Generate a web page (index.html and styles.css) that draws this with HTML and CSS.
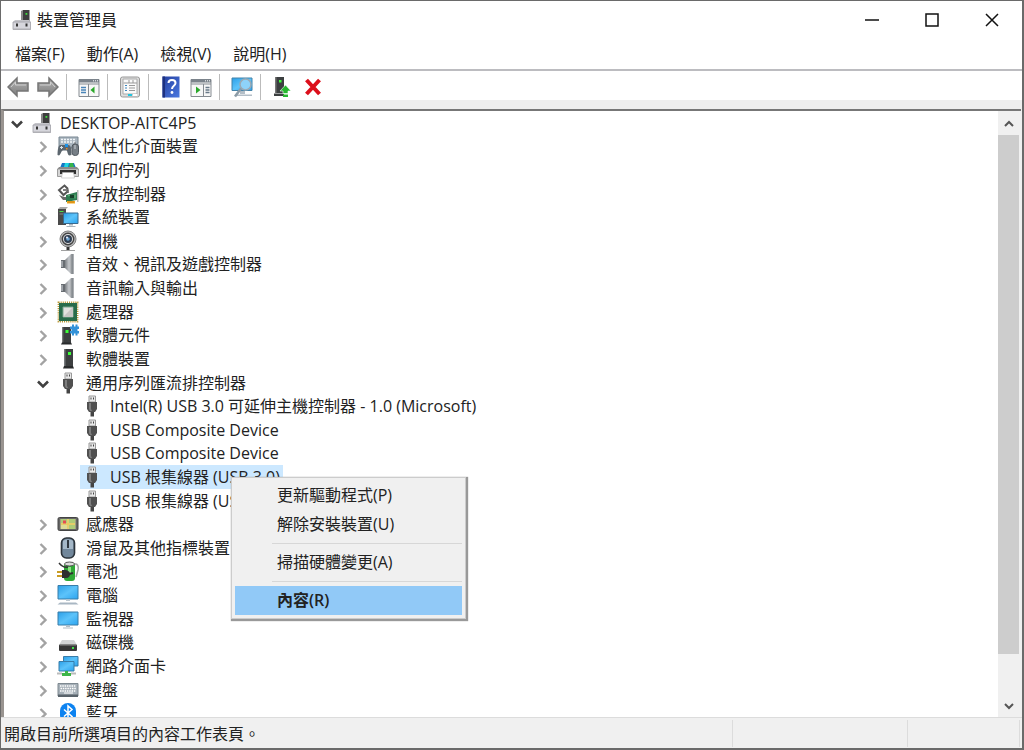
FILE: index.html
```
<!DOCTYPE html>
<html lang="zh-Hant">
<head>
    <meta charset="UTF-8">
    <meta name="viewport" content="width=device-width, initial-scale=1.0">
    <title>裝置管理員</title>
    <link rel="stylesheet" href="styles.css">
</head>
<body>
    <svg class="sprite" aria-hidden="true">
        <defs>
            <linearGradient id="blue" x1="0" y1="0" x2="1" y2="1"><stop offset="0" stop-color="#2b9fe8"/><stop offset=".5" stop-color="#5cc3fa"/><stop offset="1" stop-color="#2ba4f0"/></linearGradient>
            <linearGradient id="metal" x1="0" y1="0" x2="1" y2="0"><stop offset="0" stop-color="#7c8084"/><stop offset=".5" stop-color="#c5c8cc"/><stop offset="1" stop-color="#8a8d90"/></linearGradient>
            <linearGradient id="arrow" x1="0" y1="0" x2="0" y2="1"><stop offset="0" stop-color="#b4b4b4"/><stop offset="1" stop-color="#7c7c7c"/></linearGradient>
            <linearGradient id="book" x1="0" y1="0" x2="1" y2="1"><stop offset="0" stop-color="#2540a0"/><stop offset="1" stop-color="#4a78e0"/></linearGradient>
        </defs>
        <symbol id="right" viewBox="0 0 18 18"><path d="M6.500 4 11.500 9 6.500 14" fill="none" stroke="#a3a3a3" stroke-width="2.400"/></symbol>
        <symbol id="down" viewBox="0 0 18 18"><path d="M4 6.500 9 11.500 14 6.500" fill="none" stroke="#404040" stroke-width="2.600"/></symbol>
        <symbol id="computer" viewBox="0 0 22 22">
            <path d="M12 1h6.500v12H12z" fill="#3e3e3e"/><path d="M10 2 12 1v11h-2z" fill="#888"/><path d="M14.500 4h1.800v1.800h-1.800z" fill="#3ce03c"/>
            <path d="M4 11h14l1.800 2H2z" fill="#c5c5ca"/><path d="M2 13h17.500v7.500H2z" fill="#d6d6dc" stroke="#a0a0a6" stroke-width=".8"/>
            <path d="M5 14.500h2v3H5zm9.500 0h2v3h-2z" fill="#333"/><path d="M2 19.500h17.500V21H2z" fill="#b0b0b5"/>
        </symbol>
        <symbol id="hid" viewBox="0 0 22 22">
            <path d="M2 2h19v11H2z" fill="#a9b5bf" stroke="#788792"/><path d="M4 4.500h15M4 7h15" stroke="#f1f5f8" stroke-width="1.500" stroke-dasharray="2 1"/>
            <path d="M.500 20c0-6 1-10 3-10h8c2 0 3 3 3 10l-2 .500c-2 0-2-5-3-5H6c-2 0-2 4-4 5z" fill="#5c666e"/>
            <path d="M3 12.500h3M4.500 11v3" stroke="#dbe3e8"/><path d="M8 9h3v3H8z" fill="#1b91e6"/><path d="M9 13h1.500v1.500H9z" fill="#e68928"/>
            <path d="M18 7v3" stroke="#777"/><rect x="15" y="9" width="6.500" height="11.500" rx="3" fill="#777f86" stroke="#515960"/><path d="M18 10v4" stroke="#cdd3d8"/>
        </symbol>
        <symbol id="printer" viewBox="0 0 22 22">
            <path d="M5 4h12l2 5H3z" fill="#1674c4"/><path d="M8 4h4l-1 4H7z" fill="#21d7e0"/><path d="M13 4h3l1 4h-5z" fill="#37b34a"/>
            <path d="M2 8h18l1.500 2H.500z" fill="#8a8a8a"/><path d="M.500 10h21v7.500h-21z" fill="#d5d5d5" stroke="#898989" stroke-width=".8"/><path d="M3 11h16v4H3z" fill="#303030"/><path d="M5.500 13.500h11l1 5.500H4.500z" fill="#fff" stroke="#bbb" stroke-width=".6"/>
        </symbol>
        <symbol id="storage" viewBox="0 0 22 22">
            <path d="M11 6 7.500 2.500 2 7l4.500 5 4-3.500" fill="none" stroke="#565656" stroke-width="2"/><path d="M6 7h5v3" fill="none" stroke="#565656" stroke-width="1.500"/>
            <path d="M2 12l4 5h5v-3H7z" fill="#696969"/><path d="m9 12 11-3v8l-11 2z" fill="#2e7b51"/><path d="M13 12h4v3h-4z" fill="#173f29"/><path d="m11 13 2-1m5-.500v4" stroke="#68bf81"/>
            <path d="M10 18h8v2.500h-8z" fill="#f2a61c"/><path d="M12 18v2m2-2v2m2-2v2" stroke="#aa6c10" stroke-width=".6"/><path d="M20 7h1.500v12H20z" fill="#bbb"/>
        </symbol>
        <symbol id="system" viewBox="0 0 22 22">
            <path d="M1 3h8v16H1z" fill="#4a4a4a"/><path d="M1 3 3 1h8L9 3z" fill="#aaa"/><path d="M2.500 5h4v1h-4z" fill="#4be04b"/><path d="M2.500 8h5" stroke="#888"/>
            <path d="M6.500 7h14.500v10.500H6.500z" fill="url(#blue)" stroke="#386b91"/><path d="M12 18h4v1.500h-4zM9.500 20h9v1h-9z" fill="#a9b3bb"/>
        </symbol>
        <symbol id="camera" viewBox="0 0 22 22">
            <circle cx="11" cy="9" r="8" fill="#bbb" stroke="#858585"/><circle cx="11" cy="9" r="5.700" fill="#e5e5e5" stroke="#444" stroke-width="1.500"/><circle cx="11" cy="9" r="4" fill="#303e51"/><circle cx="11" cy="9" r="1.800" fill="#6aa5d4"/><circle cx="10" cy="7.500" r="1" fill="#eef"/>
            <path d="M9.500 17h3v3h-3z" fill="#333"/><path d="M4 20h14v1H4z" fill="#a0a0a0"/>
        </symbol>
        <symbol id="speaker" viewBox="0 0 22 22">
            <path d="M4 7h5v8H4z" fill="#686d72"/><path d="M8 7 14 1h2v20h-2l-6-6z" fill="url(#metal)"/><path d="M14.500 1h2.200v20h-2.200z" fill="#878c91"/><path d="M5 8v6" stroke="#d8dce0"/>
        </symbol>
        <symbol id="cpu" viewBox="0 0 22 22">
            <path d="M1.500 1.500h19v19h-19z" fill="none" stroke="#b89632" stroke-width="1.800" stroke-dasharray="1.100 1"/><path d="M2 2h18v18H2z" fill="#286c4b"/><path d="M6 6h10v10H6z" fill="#e2e2e0" stroke="#7ba58d"/><path d="m6 16 10-10v10z" fill="#c7c7c5"/>
        </symbol>
        <symbol id="tower" viewBox="0 0 22 22">
            <path d="M7 1h9v17H7z" fill="#3c3f40"/><path d="M7 1h1.500v17H7z" fill="#75797b"/><path d="M11 4h3v3h-3z" fill="#3cff38"/><path d="M7 18h9l1 2.500H6z" fill="#292b2c"/>
        </symbol>
        <symbol id="component" viewBox="0 0 22 22">
            <path d="M5 3h9v16H5z" fill="#3c3f40"/><path d="M5 3h1.300v16H5z" fill="#777"/><path d="M8.500 6h3v3h-3z" fill="#3cff38"/><path d="M5 18.500h9l1 2H4z" fill="#292b2c"/>
            <path d="M13 2.500h2V.500h2v2h1.500v-2h2v2H22V5h-1.500v2H22v2.500h-1.500v2h-2v-2H17v2h-2v-2h-2V7h1.500V5H13z" fill="#3392d8"/>
        </symbol>
        <symbol id="usb" viewBox="0 0 22 22">
            <path d="M8 1h6.500v6H8z" fill="#e9e9e9" stroke="#999"/><path d="M9.500 2.500h1v2h-1zm2.500 0h1v2h-1z" fill="#444"/><path d="M6 7h10v7l-2 3H8l-2-3z" fill="#505050"/><path d="M8 8h2v6l1 2H9l-1-2z" fill="#7d7d7d"/><path d="M9.500 17h3.500v4.500H9.500z" fill="#444"/>
        </symbol>
        <symbol id="sensor" viewBox="0 0 22 22">
            <rect x="1" y="4.500" width="20" height="13" rx="1.500" fill="#666" stroke="#444"/><path d="M3.500 6h15v10h-15z" fill="#dddb98"/><path d="M4 6h6v4H4zm8 0h6v4h-6zm0 6h6v4h-6z" fill="#aecb78"/><path d="M4 11h14M11 6v10" stroke="#e8c95a" stroke-width="1.300"/><path d="M6 7.500h3v3H6z" fill="#e64c51"/>
        </symbol>
        <symbol id="mouse" viewBox="0 0 22 22">
            <rect x="4.500" y="1" width="13" height="20" rx="5" fill="#71879b" stroke="#2c343b" stroke-width="1.600"/><path d="M6 4c2-2 8-2 10 0v8H6z" fill="#a5b8c8"/><path d="M11 3v8" stroke="#303840" stroke-width="2"/>
        </symbol>
        <symbol id="battery" viewBox="0 0 22 22">
            <path d="M16 4h3q3 1 2 6l-2 7" fill="none" stroke="#a7a7a7" stroke-width="1.500"/><rect x="7" y="3" width="11" height="18" rx="3" fill="#2fa836"/><path d="M11 7h3v7h-3z" fill="#8be082"/><ellipse cx="12.500" cy="4" rx="5" ry="2" fill="#ddd" stroke="#555"/>
            <path d="M2 3q4 5 9 4" fill="none" stroke="#333" stroke-width="1.500"/><path d="M0 12h6M0 16h6" stroke="#c99c24" stroke-width="1.800"/><path d="M5 10h4c3 1 4 2 4 4s-1 4-4 4H5z" fill="#303030"/><path d="m12 14 4-1" stroke="#303030" stroke-width="2"/>
        </symbol>
        <symbol id="pc" viewBox="0 0 22 22">
            <path d="M1 1.500h20V15H1z" fill="url(#blue)" stroke="#397ca8"/><path d="M9 15.500h4V17H9z" fill="#bdc9d1"/><path d="M3 18.500h16l2.500 2H.500z" fill="#a9b7c3"/>
        </symbol>
        <symbol id="monitor" viewBox="0 0 22 22">
            <path d="M1 4h20v13H1z" fill="url(#blue)" stroke="#397ca8"/><path d="M9 17.500h4V19H9zM6 19.500h10v1H6z" fill="#b2bec7"/>
        </symbol>
        <symbol id="disk" viewBox="0 0 22 22">
            <path d="M5 9h12l3 5H2z" fill="#d3d5d6"/><rect x="2" y="13.500" width="18" height="6.500" rx="1" fill="#373737"/><path d="M3 14h16" stroke="#8d8d8d"/><path d="M15 16h2v2h-2z" fill="#42e24b"/>
        </symbol>
        <symbol id="network" viewBox="0 0 22 22">
            <path d="M6.500 1.500H21V11H6.500z" fill="url(#blue)" stroke="#397ca8"/><path d="M2 6.500h15V16H2z" fill="url(#blue)" stroke="#397ca8"/><path d="M8 16h3v2h3v3H5v-3h3z" fill="#3eb549"/><path d="M0 18.500h5m9 0h5" stroke="#bbb" stroke-width="2"/>
        </symbol>
        <symbol id="keyboard" viewBox="0 0 22 22">
            <path d="M1 4.500h20V17H1z" fill="#a6b0b8" stroke="#7e8991"/><path d="M3 7h16M3.500 9.500h16M3 12h16" stroke="#fff" stroke-width="1.300" stroke-dasharray="1.500 .8"/><path d="M7 14h9" stroke="#fff"/><path d="M1 15.500h20V18H1z" fill="#59636b"/>
        </symbol>
        <symbol id="bluetooth" viewBox="0 0 22 22">
            <rect x="3" y="1" width="16" height="20" rx="8" fill="#0c82f0"/><path d="m7 7.500 8 7-4 3.500V4l4 3.500-8 7" fill="none" stroke="#fff" stroke-width="1.500"/>
        </symbol>
        <symbol id="back" viewBox="0 0 22 22"><path d="M1 11 10 2v5h11v8H10v5z" fill="url(#arrow)" stroke="#767676" stroke-width="1.500"/><path d="m4 11 4.500-5v3H19" fill="none" stroke="#cecece"/></symbol>
        <symbol id="forward" viewBox="0 0 22 22"><path d="m21 11-9-9v5H1v8h11v5z" fill="url(#arrow)" stroke="#767676" stroke-width="1.500"/><path d="M3 9h10.500V6l4.500 5" fill="none" stroke="#cecece"/></symbol>
        <symbol id="treeview" viewBox="0 0 22 22">
            <path d="M1 3.500h20v17H1z" fill="#f7f7f7" stroke="#858b91"/><path d="M1 3h20v3.500H1z" fill="#7b838b"/><path d="M15 4.800h1m1 0h1m1 0h1" stroke="#fff"/><path d="M1 8h20M10.500 8v12" stroke="#858b91"/><path d="M3 11.500h5M3 14h5M3 16.500h5" stroke="#4985b9" stroke-width="1.300"/><path d="M16.500 10.500v7L12.500 14z" fill="#29a729"/>
        </symbol>
        <symbol id="actionpane" viewBox="0 0 22 22">
            <path d="M1 3.500h20v17H1z" fill="#f7f7f7" stroke="#858b91"/><path d="M1 3h20v3.500H1z" fill="#7b838b"/><path d="M15 4.800h1m1 0h1m1 0h1" stroke="#fff"/><path d="M1 8h20M13.500 8v12" stroke="#858b91"/><path d="M15.500 11.500h4m-4 2.500h4m-4 2.500h4" stroke="#687988" stroke-width="1.300"/><path d="M6 10.500v7l4.500-3.500z" fill="#29a729"/>
        </symbol>
        <symbol id="properties" viewBox="0 0 22 22">
            <rect x="1.500" y="1" width="19" height="20" rx="2" fill="#ddd" stroke="#999"/><path d="M4 3h14v15H4z" fill="#fafafa" stroke="#aaa"/><path d="M4.500 7H18M10 4v3m4-3v3" stroke="#999"/><path d="M6 9.500h2M6 12h2m-2 2.500h2" stroke="#3c87bf"/><path d="M10 9.500h6M10 12h6m-6 2.500h6" stroke="#999"/><path d="M9 18h4v2H9z" fill="#20c5df"/><path d="M14 18h4v2h-4z" fill="#fff"/>
        </symbol>
        <symbol id="help" viewBox="0 0 22 22">
            <path d="M2.500.500h17v21h-17z" fill="url(#book)"/><path d="M2.500.500H5v21H2.500z" fill="#1d3180"/><path d="M8.500 7c0-4 7-4 7 0 0 3-3.500 2.500-3.500 6" fill="none" stroke="#fff" stroke-width="2"/><circle cx="12" cy="16.500" r="1.400" fill="#fff"/>
        </symbol>
        <symbol id="scan" viewBox="0 0 22 22">
            <path d="M1 2h20v12.500H1z" fill="url(#blue)" stroke="#4383aa"/><path d="M9 15h5v3H9zM6 18.500h15V20H6z" fill="#b3bec7"/><circle cx="14.500" cy="8.500" r="5.500" fill="#8ed3f9" stroke="#9aaab5" stroke-width="1.500"/><path d="m10 12.500-6 8" stroke="#8c9ba6" stroke-width="2.500"/>
        </symbol>
        <symbol id="update" viewBox="0 0 22 22">
            <path d="M3 1h9v16H3z" fill="#3c3f40"/><path d="M3 1h1.500v16H3z" fill="#777"/><path d="M7 4h2.500v2.500H7z" fill="#3cff38"/><path d="M2 17.500h10V20H2z" fill="#3c3f40"/><path d="m13.500 9 5.500 6h-3v2.500h-5V15H8z" fill="#25b82e" stroke="#fff" stroke-width=".6"/><path d="M11 18.500h5V21h-5z" fill="#25b82e"/>
        </symbol>
        <symbol id="remove" viewBox="0 0 22 22"><path d="m4.500 4 13 14M17.500 4l-13 14" stroke="#dc0f1b" stroke-width="4"/></symbol>
    </svg>

    <div class="window">
        <header class="titlebar">
            <svg class="icon"><use href="#computer"/></svg>
            <h1>裝置管理員</h1>
            <div class="controls">
                <button aria-label="最小化"><svg viewBox="0 0 14 14"><path d="M0 7h14"/></svg></button>
                <button aria-label="最大化"><svg viewBox="0 0 14 14"><path d="M1 1h12v12H1z"/></svg></button>
                <button aria-label="關閉"><svg viewBox="0 0 14 14"><path d="m1 1 12 12M13 1 1 13"/></svg></button>
            </div>
        </header>
        <nav class="menubar">
            <button>檔案(F)</button>
            <button>動作(A)</button>
            <button>檢視(V)</button>
            <button>說明(H)</button>
        </nav>
        <div class="toolbar">
            <div class="group">
                <button aria-label="上一頁"><svg class="icon"><use href="#back"/></svg></button>
                <button aria-label="下一頁"><svg class="icon"><use href="#forward"/></svg></button>
            </div>
            <div class="group"><button aria-label="顯示主控台樹狀目錄"><svg class="icon"><use href="#treeview"/></svg></button></div>
            <div class="group"><button aria-label="內容"><svg class="icon"><use href="#properties"/></svg></button></div>
            <div class="group">
                <button aria-label="說明"><svg class="icon"><use href="#help"/></svg></button>
                <button aria-label="顯示動作窗格"><svg class="icon"><use href="#actionpane"/></svg></button>
            </div>
            <div class="group"><button aria-label="掃描硬體變更"><svg class="icon"><use href="#scan"/></svg></button></div>
            <div class="group">
                <button aria-label="更新驅動程式"><svg class="icon"><use href="#update"/></svg></button>
                <button aria-label="解除安裝裝置"><svg class="icon"><use href="#remove"/></svg></button>
            </div>
        </div>

        <main class="client">
            <div class="pane">
                <div class="view">
                    <ul class="tree">
                        <li class="root"><button class="toggle" aria-label="摺疊"><svg><use href="#down"/></svg></button><span class="node"><svg class="icon"><use href="#computer"/></svg>DESKTOP-AITC4P5</span></li>
                        <li><button class="toggle" aria-label="展開"><svg><use href="#right"/></svg></button><span class="node"><svg class="icon"><use href="#hid"/></svg>人性化介面裝置</span></li>
                        <li><button class="toggle" aria-label="展開"><svg><use href="#right"/></svg></button><span class="node"><svg class="icon"><use href="#printer"/></svg>列印佇列</span></li>
                        <li><button class="toggle" aria-label="展開"><svg><use href="#right"/></svg></button><span class="node"><svg class="icon"><use href="#storage"/></svg>存放控制器</span></li>
                        <li><button class="toggle" aria-label="展開"><svg><use href="#right"/></svg></button><span class="node"><svg class="icon"><use href="#system"/></svg>系統裝置</span></li>
                        <li><button class="toggle" aria-label="展開"><svg><use href="#right"/></svg></button><span class="node"><svg class="icon"><use href="#camera"/></svg>相機</span></li>
                        <li><button class="toggle" aria-label="展開"><svg><use href="#right"/></svg></button><span class="node"><svg class="icon"><use href="#speaker"/></svg>音效、視訊及遊戲控制器</span></li>
                        <li><button class="toggle" aria-label="展開"><svg><use href="#right"/></svg></button><span class="node"><svg class="icon"><use href="#speaker"/></svg>音訊輸入與輸出</span></li>
                        <li><button class="toggle" aria-label="展開"><svg><use href="#right"/></svg></button><span class="node"><svg class="icon"><use href="#cpu"/></svg>處理器</span></li>
                        <li><button class="toggle" aria-label="展開"><svg><use href="#right"/></svg></button><span class="node"><svg class="icon"><use href="#component"/></svg>軟體元件</span></li>
                        <li><button class="toggle" aria-label="展開"><svg><use href="#right"/></svg></button><span class="node"><svg class="icon"><use href="#tower"/></svg>軟體裝置</span></li>
                        <li><button class="toggle" aria-label="摺疊"><svg><use href="#down"/></svg></button><span class="node"><svg class="icon"><use href="#usb"/></svg>通用序列匯流排控制器</span></li>
                        <li class="device"><span class="node"><svg class="icon"><use href="#usb"/></svg>Intel(R) USB 3.0 可延伸主機控制器 - 1.0 (Microsoft)</span></li>
                        <li class="device"><span class="node"><svg class="icon"><use href="#usb"/></svg>USB Composite Device</span></li>
                        <li class="device"><span class="node"><svg class="icon"><use href="#usb"/></svg>USB Composite Device</span></li>
                        <li class="device"><span class="node selected"><svg class="icon"><use href="#usb"/></svg>USB 根集線器 (USB 3.0)</span></li>
                        <li class="device"><span class="node"><svg class="icon"><use href="#usb"/></svg>USB 根集線器 (USB 3.0)</span></li>
                        <li><button class="toggle" aria-label="展開"><svg><use href="#right"/></svg></button><span class="node"><svg class="icon"><use href="#sensor"/></svg>感應器</span></li>
                        <li><button class="toggle" aria-label="展開"><svg><use href="#right"/></svg></button><span class="node"><svg class="icon"><use href="#mouse"/></svg>滑鼠及其他指標裝置</span></li>
                        <li><button class="toggle" aria-label="展開"><svg><use href="#right"/></svg></button><span class="node"><svg class="icon"><use href="#battery"/></svg>電池</span></li>
                        <li><button class="toggle" aria-label="展開"><svg><use href="#right"/></svg></button><span class="node"><svg class="icon"><use href="#pc"/></svg>電腦</span></li>
                        <li><button class="toggle" aria-label="展開"><svg><use href="#right"/></svg></button><span class="node"><svg class="icon"><use href="#monitor"/></svg>監視器</span></li>
                        <li><button class="toggle" aria-label="展開"><svg><use href="#right"/></svg></button><span class="node"><svg class="icon"><use href="#disk"/></svg>磁碟機</span></li>
                        <li><button class="toggle" aria-label="展開"><svg><use href="#right"/></svg></button><span class="node"><svg class="icon"><use href="#network"/></svg>網路介面卡</span></li>
                        <li><button class="toggle" aria-label="展開"><svg><use href="#right"/></svg></button><span class="node"><svg class="icon"><use href="#keyboard"/></svg>鍵盤</span></li>
                        <li><button class="toggle" aria-label="展開"><svg><use href="#right"/></svg></button><span class="node"><svg class="icon"><use href="#bluetooth"/></svg>藍牙</span></li>
                    </ul>
                </div>
                <div class="scrollbar">
                    <button aria-label="向上"><svg viewBox="0 0 10 10"><path d="M1 7 5 3l4 4"/></svg></button>
                    <div class="track"><div class="thumb"></div></div>
                    <button aria-label="向下"><svg viewBox="0 0 10 10"><path d="m1 3 4 4 4-4"/></svg></button>
                </div>
                <div class="context">
                    <button>更新驅動程式(P)</button>
                    <button>解除安裝裝置(U)</button>
                    <hr>
                    <button>掃描硬體變更(A)</button>
                    <hr>
                    <button class="active">內容(R)</button>
                </div>
            </div>
        </main>
        <footer class="statusbar">
            <span class="message">開啟目前所選項目的內容工作表頁。</span>
            <span></span>
            <span></span>
        </footer>
    </div>
</body>
</html>
```
FILE: styles.css
```
* {
    box-sizing: border-box;
}
body {
    margin: 0;
    font-family: "Open Sans", "Noto Sans CJK TC", sans-serif;
    font-size: 16px;
    line-height: 22px;
    color: #222;
}
button {
    font: inherit;
    color: inherit;
    background: none;
    border: none;
    padding: 0;
}
.sprite {
    position: absolute;
    width: 0;
    height: 0;
}
.icon {
    width: 22px;
    height: 22px;
    flex: none;
}
.window {
    height: 100vh;
    display: flex;
    flex-direction: column;
    background: #fff;
    border: 1px solid #6a6a6a;
    border-right-width: 2px;
    border-bottom-width: 2px;
}
.titlebar {
    height: 38px;
    flex: none;
    display: flex;
    align-items: center;
    gap: 4px;
    padding-left: 10px;
}
.titlebar h1 {
    margin: 0;
    font-size: 16px;
    font-weight: normal;
}
.controls {
    display: flex;
    margin-left: auto;
}
.controls button {
    width: 60px;
    height: 38px;
    display: flex;
    align-items: center;
    justify-content: center;
}
.controls svg {
    width: 14px;
    height: 14px;
    fill: none;
    stroke: #111;
    stroke-width: 1.5;
}
.menubar {
    height: 32px;
    flex: none;
    display: flex;
    align-items: center;
    gap: 22px;
    padding-left: 14px;
    border-bottom: 2px solid #bcbcc0;
}
.toolbar {
    height: 29px;
    flex: none;
    display: flex;
    align-items: center;
    padding: 2px 0 0 6px;
}
.group {
    height: 26px;
    display: flex;
    align-items: center;
    gap: 8px;
    padding: 0 7px 0 11px;
    border-right: 1px solid #bbb;
}
.group:first-child {
    padding-left: 0;
}
.group:last-child {
    border: none;
}
.group button {
    height: 22px;
}
.client {
    flex: 1;
    min-height: 0;
    display: flex;
    padding: 9px 1px 0 0;
    background: #efefef;
}
.pane {
    position: relative;
    flex: 1;
    display: flex;
    border-top: 2px solid #777;
    border-left: 3px solid #999490;
    background: #fff;
}
.view {
    flex: 1;
    overflow: hidden;
}
.tree {
    list-style: none;
    margin: 0;
    padding: 0;
    height: 614px;
    display: grid;
    grid-auto-rows: 1fr;
}
.tree li {
    display: flex;
    align-items: center;
    padding-left: 30px;
    white-space: nowrap;
}
.tree .root {
    padding-left: 4px;
}
.tree .device {
    padding-left: 76px;
}
.toggle {
    width: 18px;
    height: 18px;
    margin: 2px 4px 0 0;
}
.toggle svg {
    display: block;
    width: 18px;
    height: 18px;
}
.node {
    height: 100%;
    display: flex;
    align-items: center;
    padding-right: 3px;
    padding-left: 1px;
}
.node .icon {
    margin-right: 7px;
}
.selected {
    background: #cce8ff;
}
.scrollbar {
    width: 23px;
    padding-right: 2px;
    display: flex;
    flex-direction: column;
    background: #f0f0f0;
}
.scrollbar button {
    height: 24px;
}
.scrollbar svg {
    width: 10px;
    height: 10px;
    fill: none;
    stroke: #555;
    stroke-width: 2;
}
.track {
    flex: 1;
}
.thumb {
    height: 93%;
    background: #cdcdcd;
}
.context {
    position: absolute;
    left: 227px;
    top: 366px;
    width: 235px;
    padding: 3px;
    display: flex;
    flex-direction: column;
    background: #f0f0f0;
    border: 1px solid #ccc;
    box-shadow: 1px 1px 1px 1px #999;
}
.context button {
    height: 29px;
    padding: 0 0 2px 42px;
    text-align: left;
}
.context hr {
    width: 190px;
    margin: 4px 0;
    align-self: flex-end;
    border: none;
    border-top: 1px solid #d7d7d7;
}
.context .active {
    background: #91c9f7;
    font-weight: 600;
}
.statusbar {
    height: 31px;
    flex: none;
    display: flex;
    background: #f0f0f0;
    border-top: 1px solid #dcdcdc;
    padding: 2px 2px 1px 3px;
}
.statusbar span {
    width: 112px;
    line-height: 28px;
    border-right: 1px solid #dcdcdc;
}
.statusbar span:nth-child(2) {
    width: 175px;
}
.statusbar .message {
    flex: 1;
}
```
